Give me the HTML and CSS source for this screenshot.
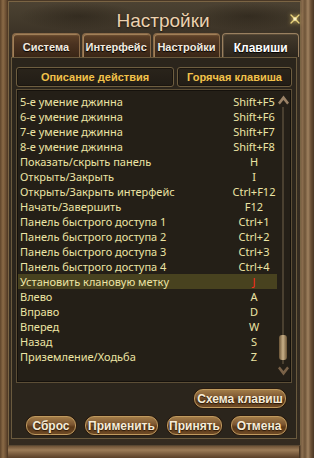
FILE: index.html
```html
<!DOCTYPE html>
<html>
<head>
    <meta charset="UTF-8">
    <title>Настройки</title>
    <link rel="stylesheet" href="styles.css">
</head>
<body>
    <div class="window">
        <div class="inner">
            <div class="titlebar">
                <span></span>
                <h1 class="title">Настройки</h1>
                <span class="close">
                    <svg width="12" height="12" viewBox="0 0 12 12">
                        <path d="M2 2 L10 10 M10 2 L2 10" stroke="#e8d27a" stroke-width="1.4" stroke-linecap="round"/>
                        <circle cx="6" cy="6" r="1.8" fill="#fff4c0"/>
                    </svg>
                </span>
            </div>
            <div class="tabs">
                <div class="tab">Система</div>
                <div class="tab">Интерфейс</div>
                <div class="tab">Настройки</div>
                <div class="tab active">Клавиши</div>
            </div>
            <div class="panel">
                <div class="heads">
                    <div class="head">Описание действия</div>
                    <div class="head">Горячая клавиша</div>
                </div>
                <div class="listbox">
                    <div class="rows" id="rows"></div>
                    <div class="scrollbar">
                        <svg class="arrow" width="11" height="10" viewBox="0 0 12 10">
                            <path d="M6 0 L12 8 L10 10 L6 5 L2 10 L0 8 Z" fill="#9a8266"/>
                        </svg>
                        <div class="track">
                            <div class="thumb"></div>
                        </div>
                        <svg class="arrow" width="11" height="10" viewBox="0 0 12 10">
                            <path d="M6 10 L12 2 L10 0 L6 5 L2 0 L0 2 Z" fill="#7a6248"/>
                        </svg>
                    </div>
                </div>
                <div class="scheme-row">
                    <button class="btn scheme">Схема клавиш</button>
                </div>
                <div class="actions">
                    <button class="btn reset">Сброс</button>
                    <button class="btn apply">Применить</button>
                    <button class="btn accept">Принять</button>
                    <button class="btn cancel">Отмена</button>
                </div>
            </div>
        </div>
    </div>
    <script>
        const binds = [
            ['5-е умение джинна', 'Shift+F5'],
            ['6-е умение джинна', 'Shift+F6'],
            ['7-е умение джинна', 'Shift+F7'],
            ['8-е умение джинна', 'Shift+F8'],
            ['Показать/скрыть панель', 'H'],
            ['Открыть/Закрыть', 'I'],
            ['Открыть/Закрыть интерфейс', 'Ctrl+F12'],
            ['Начать/Завершить', 'F12'],
            ['Панель быстрого доступа 1', 'Ctrl+1'],
            ['Панель быстрого доступа 2', 'Ctrl+2'],
            ['Панель быстрого доступа 3', 'Ctrl+3'],
            ['Панель быстрого доступа 4', 'Ctrl+4'],
            ['Установить клановую метку', 'J'],
            ['Влево', 'A'],
            ['Вправо', 'D'],
            ['Вперед', 'W'],
            ['Назад', 'S'],
            ['Приземление/Ходьба', 'Z']
        ];

        const rows = document.getElementById('rows');
        binds.forEach((bind, i) => {
            const row = document.createElement('div');
            row.className = i === 12 ? 'row selected' : 'row';
            row.innerHTML = `<span class="action">${bind[0]}</span><span class="key">${bind[1]}</span>`;
            rows.appendChild(row);
        });
    </script>
</body>
</html>
```

FILE: styles.css
```css
html, body {
    margin: 0;
    background: #1c150e;
}
body {
    font-family: "Liberation Sans", Arial, sans-serif;
}
.window {
    width: 314px;
    height: 458px;
    box-sizing: border-box;
    padding: 1px 13px 12px 8px;
    background:
        linear-gradient(90deg, #5e442a 0, #8a6a46 3px, #6a4e32 6px, #4a3522 8px, transparent 8px),
        linear-gradient(90deg, transparent 299px, #3a2a1a 299px, #8e7050 302px, #6e5438 305px, #a08260 308px, #6a5036 311px, #4a3624 314px),
        linear-gradient(180deg, transparent 446px, #6e5236 446px, #9c7c58 450px, #7a5c3e 454px, #5a4028 458px);
    background-color: #4a3826;
}
.inner {
    height: 100%;
    box-sizing: border-box;
    border: 1px solid #7a6444;
    border-bottom-color: #5a4832;
    background:
        radial-gradient(ellipse 60px 14px at 70px 14px, rgba(20, 14, 8, 0.35), transparent),
        radial-gradient(ellipse 60px 14px at 240px 14px, rgba(20, 14, 8, 0.35), transparent),
        linear-gradient(180deg, #4c4232 0, #3d3427 30px, #362d22 60px, #342b20 100%);
    padding: 0 1px 6px 2px;
    display: flex;
    flex-direction: column;
}
.titlebar {
    height: 31px;
    margin-right: -8px;
    display: grid;
    grid-template-columns: 24px 1fr 24px;
    align-items: center;
}
.title {
    margin: 0;
    text-align: center;
    font-size: 19px;
    font-weight: normal;
    color: #ecd2b0;
    padding: 6px 0 0 8px;
    text-shadow: 0 1px 2px #1a120a;
}
.close {
    display: flex;
    justify-content: center;
    padding-top: 2px;
}
.close svg {
    filter: drop-shadow(0 0 2px #f0d070);
}
.tabs {
    display: flex;
    gap: 2px;
    padding-left: 1px;
    height: 24px;
}
.tab {
    box-sizing: border-box;
    width: 68px;
    height: 24px;
    display: flex;
    align-items: center;
    justify-content: center;
    padding-top: 2px;
    font-size: 11px;
    font-weight: bold;
    color: #f4ece0;
    background: linear-gradient(180deg, #7a5a3a 0, #5a3e26 12%, #4a3220 45%, #3a2616 100%);
    border: 1px solid #8a6a48;
    border-bottom: none;
    border-radius: 4px 4px 0 0;
    box-shadow: inset 1px 1px 0 #a08058;
    text-shadow: 0 1px 1px #000;
}
.tab:nth-child(2) {
    width: 69px;
}
.tab.active {
    width: 77px;
    color: #ffffff;
    background: linear-gradient(180deg, #443a2c 0, #2c251c 100%);
    border-color: #9a8060;
    box-shadow: inset 1px 1px 0 #5a4c38;
    font-size: 12px;
    padding-top: 4px;
}
.panel {
    flex: 1;
    margin-right: 2px;
    border: 1px solid #6a5a3e;
    background: #2b251c;
    padding: 9px 4px 0 4px;
    display: flex;
    flex-direction: column;
}
.heads {
    display: grid;
    grid-template-columns: 158px 1fr;
    gap: 3px;
}
.head {
    height: 18px;
    border: 1px solid #6e5e40;
    border-radius: 3px;
    box-shadow: inset 0 0 0 1px #1a150f;
    background: linear-gradient(180deg, #2a241b, #221d16);
    display: flex;
    align-items: center;
    justify-content: center;
    font-size: 11px;
    font-weight: bold;
    color: #f2c24a;
}
.listbox {
    margin-top: 2px;
    height: 288px;
    border: 1px solid #5c4e36;
    box-shadow: inset 0 0 0 1px #15110c;
    background: #241f17;
    display: flex;
    padding: 4px 2px 0 1px;
}
.rows {
    width: 259px;
}
.row {
    display: grid;
    grid-template-columns: 1fr 46px;
    height: 15px;
    align-items: center;
    font-family: "Noto Sans", "DejaVu Sans", sans-serif;
    font-size: 11px;
    color: #ece4a4;
    line-height: 15px;
}
.action {
    padding-left: 2px;
    white-space: nowrap;
}
.key {
    text-align: center;
    white-space: nowrap;
}
.row.selected {
    background: #48421f;
}
.row.selected .key {
    color: #ff2a1a;
}
.scrollbar {
    flex: 1;
    display: flex;
    flex-direction: column;
    align-items: center;
    padding: 1px 0 6px;
}
.track {
    flex: 1;
    width: 2px;
    margin: 2px 0;
    background: #4a4030;
    display: flex;
    flex-direction: column;
    justify-content: flex-end;
    align-items: center;
}
.thumb {
    width: 8px;
    height: 25px;
    margin-bottom: 4px;
    border-radius: 3px;
    background: linear-gradient(90deg, #6a5436, #c8b088 50%, #6a5436);
}
.scheme-row {
    display: flex;
    justify-content: flex-end;
    padding: 6px 6px 0 0;
}
.actions {
    display: flex;
    justify-content: space-between;
    padding: 8px 5px 0 10px;
}
.btn {
    height: 19px;
    padding: 0;
    border: 1px solid #c09a5e;
    border-radius: 9px;
    background: linear-gradient(180deg, #a27c48 0, #7a5430 45%, #5a3818 60%, #6e4a26 100%);
    color: #f6ecd8;
    font-family: "Liberation Sans", Arial, sans-serif;
    font-size: 12px;
    font-weight: bold;
    line-height: 16px;
    white-space: nowrap;
    text-shadow: 0 1px 1px #2a1808;
    box-shadow: 0 0 0 1px #2a1c10;
}
.scheme {
    width: 92px;
}
.reset {
    width: 50px;
}
.apply {
    width: 73px;
}
.accept {
    width: 55px;
}
.cancel {
    width: 56px;
}
```
